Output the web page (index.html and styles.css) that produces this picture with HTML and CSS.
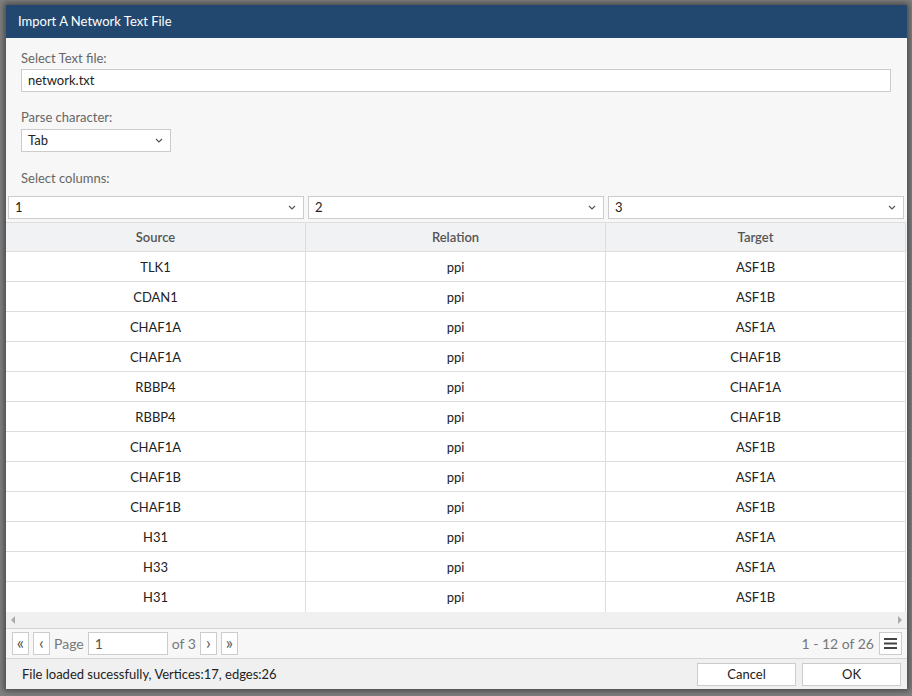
FILE: index.html
```html
<!DOCTYPE html>
<html>
<head>
<meta charset="utf-8">
<link rel="stylesheet" href="styles.css">
</head>
<body>
<div class="dialog">
  <div class="titlebar">Import A Network Text File</div>
  <div class="form">
    <div class="label">Select Text file:</div>
    <div class="textinput">network.txt</div>
    <div class="label gap1">Parse character:</div>
    <div class="select small">Tab<svg class="chev" width="8" height="5" viewBox="0 0 8 5"><path d="M1 1l3 3 3-3" fill="none" stroke="#555" stroke-width="1.2"/></svg></div>
    <div class="label gap2">Select columns:</div>
  </div>
  <div class="colselects">
    <div class="select">1<svg class="chev" width="8" height="5" viewBox="0 0 8 5"><path d="M1 1l3 3 3-3" fill="none" stroke="#555" stroke-width="1.2"/></svg></div>
    <div class="select">2<svg class="chev" width="8" height="5" viewBox="0 0 8 5"><path d="M1 1l3 3 3-3" fill="none" stroke="#555" stroke-width="1.2"/></svg></div>
    <div class="select">3<svg class="chev" width="8" height="5" viewBox="0 0 8 5"><path d="M1 1l3 3 3-3" fill="none" stroke="#555" stroke-width="1.2"/></svg></div>
  </div>
  <div class="grid">
    <div class="row head"><div class="cell">Source</div><div class="cell">Relation</div><div class="cell">Target</div></div>
    <div class="row"><div class="cell">TLK1</div><div class="cell">ppi</div><div class="cell">ASF1B</div></div>
    <div class="row"><div class="cell">CDAN1</div><div class="cell">ppi</div><div class="cell">ASF1B</div></div>
    <div class="row"><div class="cell">CHAF1A</div><div class="cell">ppi</div><div class="cell">ASF1A</div></div>
    <div class="row"><div class="cell">CHAF1A</div><div class="cell">ppi</div><div class="cell">CHAF1B</div></div>
    <div class="row"><div class="cell">RBBP4</div><div class="cell">ppi</div><div class="cell">CHAF1A</div></div>
    <div class="row"><div class="cell">RBBP4</div><div class="cell">ppi</div><div class="cell">CHAF1B</div></div>
    <div class="row"><div class="cell">CHAF1A</div><div class="cell">ppi</div><div class="cell">ASF1B</div></div>
    <div class="row"><div class="cell">CHAF1B</div><div class="cell">ppi</div><div class="cell">ASF1A</div></div>
    <div class="row"><div class="cell">CHAF1B</div><div class="cell">ppi</div><div class="cell">ASF1B</div></div>
    <div class="row"><div class="cell">H31</div><div class="cell">ppi</div><div class="cell">ASF1A</div></div>
    <div class="row"><div class="cell">H33</div><div class="cell">ppi</div><div class="cell">ASF1A</div></div>
    <div class="row last"><div class="cell">H31</div><div class="cell">ppi</div><div class="cell">ASF1B</div></div>
  </div>
  <div class="hscroll">
    <svg width="4" height="8" viewBox="0 0 4 8"><path d="M4 0v8L0 4z" fill="#aaa"/></svg>
    <svg width="4" height="8" viewBox="0 0 4 8"><path d="M0 0v8l4-4z" fill="#aaa"/></svg>
  </div>
  <div class="pager">
    <div class="pbtn">«</div>
    <div class="pbtn">‹</div>
    <span class="ptext">Page</span>
    <div class="pinput">1</div>
    <span class="ptext">of 3</span>
    <div class="pbtn">›</div>
    <div class="pbtn">»</div>
    <span class="spacer"></span>
    <span class="ptext">1 - 12 of 26</span>
    <div class="pbtn menu"><svg width="13" height="11" viewBox="0 0 13 11"><rect x="0" y="0" width="13" height="2" fill="#444"/><rect x="0" y="4.5" width="13" height="2" fill="#444"/><rect x="0" y="9" width="13" height="2" fill="#444"/></svg></div>
  </div>
  <div class="footer">
    <span class="status">File loaded sucessfully, Vertices:17, edges:26</span>
    <span class="spacer"></span>
    <div class="btn">Cancel</div>
    <div class="btn">OK</div>
  </div>
</div>
</body>
</html>
```
FILE: styles.css
```css
html, body {
  margin: 0;
  padding: 0;
}
body {
  width: 912px;
  height: 696px;
  background: #808080;
  font-family: Lato, "Open Sans", sans-serif;
  font-size: 13px;
  overflow: hidden;
}
.dialog {
  margin: 5px 0 0 6px;
  width: 901px;
  height: 684px;
  background: #f7f7f7;
  box-shadow: 0 0 6px 2px rgba(0,0,0,0.45);
  display: flex;
  flex-direction: column;
}
.titlebar {
  height: 33px;
  flex: none;
  background: #23486f;
  color: #fff;
  line-height: 33px;
  padding-left: 12px;
}
.form {
  padding: 12px 15px 0 15px;
  display: flex;
  flex-direction: column;
  align-items: flex-start;
}
.label {
  color: #666;
  line-height: 17px;
  height: 17px;
}
.gap1 {
  margin-top: 17px;
}
.gap2 {
  margin-top: 18px;
}
.textinput {
  margin-top: 2px;
  box-sizing: border-box;
  width: 870px;
  height: 23px;
  border: 1px solid #ccc;
  background: #fff;
  color: #222;
  padding-left: 6px;
  line-height: 21px;
}
.select {
  box-sizing: border-box;
  height: 23px;
  border: 1px solid #ccc;
  background: #fff;
  color: #222;
  padding: 0 7px 0 6px;
  line-height: 21px;
  display: flex;
  justify-content: space-between;
  align-items: center;
}
.select.small {
  margin-top: 3px;
  width: 150px;
}
.colselects {
  margin-top: 9px;
  padding: 0 2px;
  display: grid;
  grid-template-columns: 296px 296px 296px;
  column-gap: 4px;
}
.chev {
  display: block;
}
.grid {
  margin-top: 3px;
  display: flex;
  flex-direction: column;
}
.row {
  display: grid;
  grid-template-columns: 300px 300px 300px;
  height: 30px;
  background: #fff;
}
.row.head {
  background: #f1f2f4;
}
.row.head .cell {
  color: #555;
  font-weight: 600;
  border-top: 1px solid #ddd;
}
.cell {
  box-sizing: border-box;
  border-right: 1px solid #ddd;
  border-bottom: 1px solid #ddd;
  color: #222;
  display: flex;
  align-items: center;
  justify-content: center;
}
.row.last .cell {
  border-bottom: none;
}
.hscroll {
  height: 16px;
  background: #f0f0f0;
  display: flex;
  justify-content: space-between;
  align-items: center;
  padding: 0 5px;
  border-bottom: 1px solid #d4d4d4;
}
.pager {
  height: 30px;
  box-sizing: border-box;
  display: flex;
  align-items: center;
  padding: 0 5px 0 6px;
  gap: 4px;
  border-bottom: 1px solid #d4d4d4;
  background: #f7f7f7;
}
.pbtn {
  box-sizing: border-box;
  width: 17px;
  height: 23px;
  border: 1px solid #ccc;
  background: #fff;
  color: #555;
  display: flex;
  align-items: center;
  justify-content: center;
  font-size: 17px;
  line-height: 1;
  padding-bottom: 2px;
}
.pbtn.menu {
  width: 23px;
  margin-left: 1px;
  padding-bottom: 0;
}
.ptext {
  color: #777;
  font-size: 14px;
}
.pinput {
  box-sizing: border-box;
  width: 80px;
  height: 23px;
  border: 1px solid #ccc;
  background: #fff;
  color: #555;
  padding-left: 6px;
  line-height: 21px;
  font-size: 14px;
}
.spacer {
  flex: 1;
}
.footer {
  flex: 1;
  display: flex;
  align-items: center;
  padding: 0 6px 0 16px;
  gap: 6px;
  background: #f0f0f0;
}
.status {
  color: #222;
}
.btn {
  box-sizing: border-box;
  width: 99px;
  height: 23px;
  border: 1px solid #ccc;
  background: #fff;
  color: #222;
  display: flex;
  align-items: center;
  justify-content: center;
}
```
